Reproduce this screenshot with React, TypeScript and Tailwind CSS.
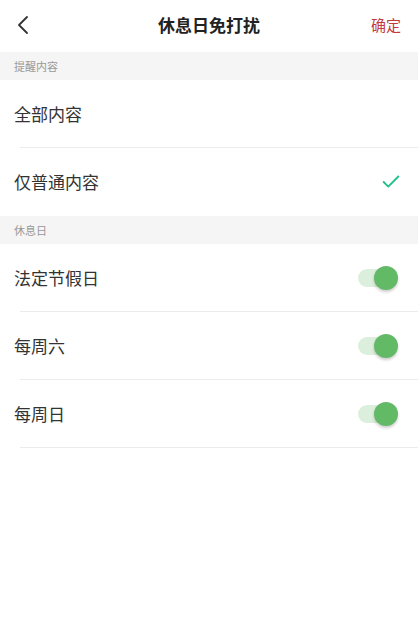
import { Check } from 'lucide-react';

const FONT = "font-['Noto_Sans_CJK_SC','Noto_Sans',sans-serif]";

function SectionHeader({ label }: { label: string }) {
  return (
    <div className="h-[28px] bg-[#f5f5f5] flex items-center px-[14px]">
      <span className="text-[11px] text-[#999999]">{label}</span>
    </div>
  );
}

function Row({ label, right, divider = true }: { label: string; right?: React.ReactNode; divider?: boolean }) {
  return (
    <div className="relative h-[68px] flex items-center justify-between pl-[14px] pr-[20px]">
      <span className="text-[17px] text-[#333333]">{label}</span>
      {right}
      {divider && <div className="absolute left-[20px] right-0 bottom-0 h-px bg-[#ececec]" />}
    </div>
  );
}

function Toggle() {
  return (
    <div className="relative w-[40px] h-[24px] flex items-center">
      <div className="w-[32px] h-[18px] rounded-full bg-[#dceedc]" />
      <div className="absolute right-0 top-0 w-[24px] h-[24px] rounded-full bg-[#62b966] shadow-[0_2px_3px_rgba(0,0,0,0.2)]" />
    </div>
  );
}

export default function App() {
  return (
    <div className={`${FONT} w-[418px] h-[637px] bg-white`}>
      <div className="h-[52px] grid grid-cols-[1fr_auto_1fr] items-center px-[14px]">
        <svg width="14" height="20" viewBox="0 0 14 20" className="ml-[2px] mb-[2px]">
          <path d="M11 2 L3 10 L11 18" fill="none" stroke="#333" strokeWidth="1.8" strokeLinecap="round" strokeLinejoin="round" />
        </svg>
        <span className="text-[17px] font-bold text-[#222222] mb-[2px]">休息日免打扰</span>
        <span className="justify-self-end text-[15px] text-[#c23a3f] mr-[3px] mb-[2px]">确定</span>
      </div>
      <SectionHeader label="提醒内容" />
      <Row label="全部内容" />
      <Row
        label="仅普通内容"
        divider={false}
        right={<Check size={22} strokeWidth={2} className="text-[#22bf8a] mr-[-4px]" />}
      />
      <SectionHeader label="休息日" />
      <Row label="法定节假日" right={<Toggle />} />
      <Row label="每周六" right={<Toggle />} />
      <Row label="每周日" right={<Toggle />} />
    </div>
  );
}
